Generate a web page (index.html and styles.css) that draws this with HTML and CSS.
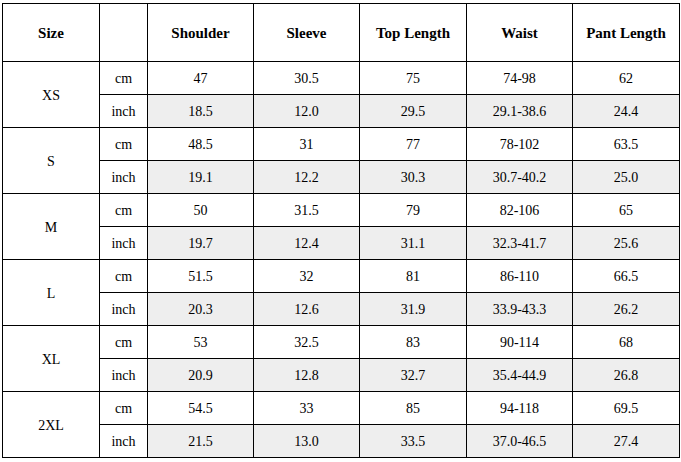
FILE: index.html
```html
<!DOCTYPE html>
<html>
<head>
<meta charset="utf-8">
<link rel="stylesheet" href="styles.css">
</head>
<body>
<table class="size-table">
  <colgroup>
    <col class="c-size"><col class="c-unit"><col class="c-a"><col class="c-b"><col class="c-c"><col class="c-d"><col class="c-e">
  </colgroup>
  <thead>
    <tr class="head">
      <th>Size</th><th></th><th>Shoulder</th><th>Sleeve</th><th>Top Length</th><th>Waist</th><th>Pant Length</th>
    </tr>
  </thead>
  <tbody>
    <tr><td class="size" rowspan="2">XS</td><td class="unit">cm</td><td>47</td><td>30.5</td><td>75</td><td>74-98</td><td>62</td></tr>
    <tr class="inch"><td class="unit">inch</td><td>18.5</td><td>12.0</td><td>29.5</td><td>29.1-38.6</td><td>24.4</td></tr>
    <tr><td class="size" rowspan="2">S</td><td class="unit">cm</td><td>48.5</td><td>31</td><td>77</td><td>78-102</td><td>63.5</td></tr>
    <tr class="inch"><td class="unit">inch</td><td>19.1</td><td>12.2</td><td>30.3</td><td>30.7-40.2</td><td>25.0</td></tr>
    <tr><td class="size" rowspan="2">M</td><td class="unit">cm</td><td>50</td><td>31.5</td><td>79</td><td>82-106</td><td>65</td></tr>
    <tr class="inch"><td class="unit">inch</td><td>19.7</td><td>12.4</td><td>31.1</td><td>32.3-41.7</td><td>25.6</td></tr>
    <tr><td class="size" rowspan="2">L</td><td class="unit">cm</td><td>51.5</td><td>32</td><td>81</td><td>86-110</td><td>66.5</td></tr>
    <tr class="inch"><td class="unit">inch</td><td>20.3</td><td>12.6</td><td>31.9</td><td>33.9-43.3</td><td>26.2</td></tr>
    <tr><td class="size" rowspan="2">XL</td><td class="unit">cm</td><td>53</td><td>32.5</td><td>83</td><td>90-114</td><td>68</td></tr>
    <tr class="inch"><td class="unit">inch</td><td>20.9</td><td>12.8</td><td>32.7</td><td>35.4-44.9</td><td>26.8</td></tr>
    <tr><td class="size" rowspan="2">2XL</td><td class="unit">cm</td><td>54.5</td><td>33</td><td>85</td><td>94-118</td><td>69.5</td></tr>
    <tr class="inch"><td class="unit">inch</td><td>21.5</td><td>13.0</td><td>33.5</td><td>37.0-46.5</td><td>27.4</td></tr>
  </tbody>
</table>
</body>
</html>
```
FILE: styles.css
```css
html, body {
  margin: 0;
  padding: 0;
  background: #ffffff;
}
body {
  padding: 3px 0 0 2px;
  font-family: "Liberation Serif", "Times New Roman", serif;
  color: #000;
}
.size-table {
  border-collapse: separate;
  border-spacing: 0;
  table-layout: fixed;
  width: 678px;
  border-left: 1px solid #000;
  border-top: 1px solid #000;
}
.c-size { width: 97px; }
.c-unit { width: 48px; }
.c-a { width: 106px; }
.c-b { width: 106px; }
.c-c { width: 107px; }
.c-d { width: 106px; }
.c-e { width: 107px; }
.size-table th,
.size-table td {
  box-sizing: border-box;
  border-right: 1px solid #000;
  border-bottom: 1px solid #000;
  padding: 2px 0 0 0;
  text-align: center;
  vertical-align: middle;
  font-size: 14px;
  height: 33px;
}
.size-table th {
  font-size: 15px;
  font-weight: bold;
  height: 58px;
}
.inch td {
  background: #eeeeee;
}
.inch td.unit,
td.size {
  background: #ffffff;
}
```
